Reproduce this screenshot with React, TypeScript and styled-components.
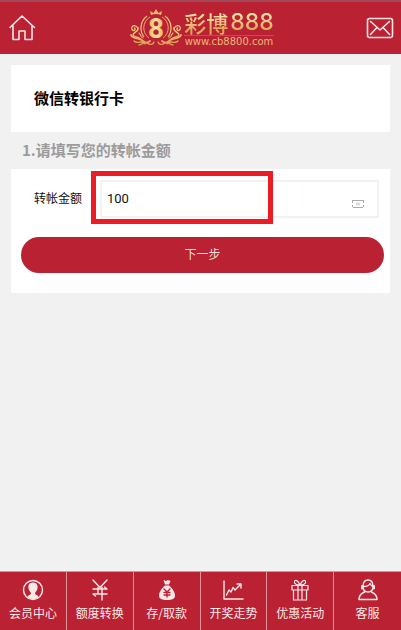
import React from "react";
import styled, { createGlobalStyle } from "styled-components";

const RED = "#ba2233";
const SANS = '"Noto Sans CJK SC", "Noto Sans", sans-serif';

const GlobalStyle = createGlobalStyle`
  *, *::before, *::after { box-sizing: border-box; }
  body { margin: 0; background: #f1f1f1; font-family: ${SANS}; color: #111; }
  button, input { font-family: inherit; }
`;

const Page = styled.div`
  min-height: 100vh;
  display: flex;
  flex-direction: column;
`;

const Header = styled.header`
  height: 54px;
  padding: 0 7px 0 8px;
  display: flex;
  align-items: center;
  justify-content: space-between;
  background: ${RED};
  border-top: 2px solid #a4495a;
`;

const IconLink = styled.a`
  display: flex;
  color: #fbe4e6;
`;

const Brand = styled.a`
  display: flex;
  align-items: center;
  gap: 2px;
  margin-left: 2px;
  text-decoration: none;
`;

const BrandText = styled.span`
  display: flex;
  flex-direction: column;
`;

const BrandName = styled.span`
  display: flex;
  align-items: center;
  gap: 2px;
  height: 25px;
  font-size: 22px;
  line-height: 25px;
  font-weight: 500;
  color: transparent;
  background: linear-gradient(#fbe3a4 20%, #e2a65a 80%);
  background-clip: text;
  -webkit-background-clip: text;
`;

const BrandNumber = styled.span`
  font-family: Inter, sans-serif;
  font-size: 23px;
`;

const BrandSite = styled.span`
  border-top: 1px solid #c64c48;
  font: 10px/11px "DejaVu Sans", sans-serif;
  text-align: center;
  color: #e9b877;
`;

const Main = styled.main`
  flex: 1;
  padding: 11px 11px 0;
`;

const TitleCard = styled.section`
  padding: 21px 23px 22px;
  background: #fff;
`;

const Title = styled.h1`
  margin: 0;
  font-size: 15px;
  line-height: 24px;
  font-weight: 700;
  color: #000;
`;

const StepTitle = styled.h2`
  margin: 0;
  padding: 6px 11px 7px;
  font-size: 15px;
  line-height: 24px;
  font-weight: 700;
  color: #9b9b9b;
`;

const FormCard = styled.form`
  padding: 11px 6px 20px 10px;
  background: #fff;
`;

const FieldRow = styled.div`
  display: flex;
  align-items: center;
  padding: 0 5px 0 13px;
`;

const FieldLabel = styled.label`
  width: 66px;
  flex: none;
  padding-bottom: 2px;
  font-size: 12px;
  line-height: 20px;
`;

const FieldBox = styled.div`
  position: relative;
  flex: 1;
  display: flex;
  height: 38px;
  padding-right: 13px;
  border: 2px solid #f2f2f2;
`;

const AmountInput = styled.input`
  flex: 1;
  min-width: 0;
  padding: 0 5px 2px;
  border: 0;
  outline: 0;
  background: transparent;
  font: 13px Roboto, sans-serif;
  color: #111;
`;

const NoteIcon = styled.svg`
  flex: none;
  align-self: flex-end;
  margin-bottom: 8px;
`;

const Highlight = styled.span`
  position: absolute;
  left: -11px;
  top: -11px;
  width: 182px;
  height: 53px;
  border: 5px solid #ed1c24;
  pointer-events: none;
`;

const NextButton = styled.button`
  display: block;
  width: 100%;
  height: 36px;
  margin-top: 19px;
  padding: 0 0 3px;
  border: 0;
  border-radius: 18px;
  background: ${RED};
  color: #f3dcdf;
  font-size: 12px;
`;

const TabBar = styled.nav`
  display: grid;
  grid-template-columns: repeat(6, 1fr);
  border-top: 1px solid #dc8f97;
  background: ${RED};
`;

const Tab = styled.a`
  display: flex;
  flex-direction: column;
  align-items: center;
  padding: 6px 0 7px;
  color: #fbe9ea;
  font-size: 12px;
  line-height: 20px;
  gap: 1px;
  text-decoration: none;
  white-space: nowrap;
  border-right: 1px solid #e0929b;

  &:last-child { border-right: 0; }
`;

const TabIcon = styled.svg`
  width: 24px;
  height: 24px;
  fill: none;
  stroke: currentColor;
  stroke-width: 1.4;
  stroke-linejoin: round;
  stroke-linecap: round;
`;

const Scroll = () => (
  <g fill="none" stroke="url(#gold)" strokeLinecap="round">
    <path d="M8 19C4 14 0 18 2.500 21C4.500 22.500 6 20 4.500 19" strokeWidth="1.200" />
    <path d="M8 19C9 23 3 23 3 26C4 29 8 27 10 30" strokeWidth="1.500" />
    <path d="M1 26C3 31 9 28 13 32C15 34 18 34 20 32" strokeWidth="1.800" />
    <path d="M4 32C8 36 12 30 15 35M9 36C12 36 13 33 17 34C20 36 23 36 24 33" strokeWidth="1.300" />
    <path d="M9 24C11 25 10 28 13 29" strokeWidth="1.100" />
  </g>
);

const Emblem = () => (
  <svg width="52" height="38" viewBox="0 0 52 38" aria-hidden="true">
    <defs>
      <linearGradient id="gold" x1="0" y1="0" x2="0" y2="38" gradientUnits="userSpaceOnUse">
        <stop offset="0" stopColor="#eeb660" />
        <stop offset=".5" stopColor="#f3cf86" />
        <stop offset="1" stopColor="#dc9850" />
      </linearGradient>
      <linearGradient id="goldDigit" x1="17" y1="0" x2="35" y2="0" gradientUnits="userSpaceOnUse">
        <stop offset="0" stopColor="#e8a850" />
        <stop offset=".5" stopColor="#fbe6a4" />
        <stop offset="1" stopColor="#e8a850" />
      </linearGradient>
    </defs>
    <path d="M21 6L20 2L23.500 4L26 0L28.500 4L32 2L31 6Q26 4 21 6Z" fill="url(#gold)" />
    <g fill="none" stroke="url(#gold)">
      <path d="M17 7A15 15 0 0 0 14 28M35 7A15 15 0 0 1 38 28" strokeWidth="1.200" />
      <path d="M20 8A12.500 12.500 0 0 0 19 29M32 8A12.500 12.500 0 0 1 33 29" strokeWidth=".8" />
    </g>
    <Scroll />
    <g transform="translate(52 0) scale(-1 1)"><Scroll /></g>
    <text x="26" y="29" textAnchor="middle" fontFamily="Roboto, sans-serif" fontSize="28" fontWeight="700" fill="url(#goldDigit)">8</text>
  </svg>
);

const HomeIcon = () => (
  <svg width="28" height="28" viewBox="0 0 28 28" fill="none" stroke="currentColor" strokeWidth="1.600" strokeLinejoin="round" strokeLinecap="round" aria-hidden="true">
    <path d="M2 13.500L14 2L26.500 13.500M5 11.500V25.500H11V17H17V25.500H24V11.500" />
  </svg>
);

const MailIcon = () => (
  <svg width="28" height="22" viewBox="0 0 28 22" fill="none" stroke="currentColor" strokeWidth="1.600" strokeLinejoin="round" aria-hidden="true">
    <rect x="1.500" y="1.500" width="25" height="19" rx="2" />
    <path d="M4 4L14 13L24 4M4 18L11 10.500M24 18L17 10.500" />
  </svg>
);

const tabs: { label: string; icon: React.ReactNode }[] = [
  {
    label: "会员中心",
    icon: (
      <>
        <circle cx="12" cy="12" r="9.500" />
        <path d="M12 4.500C8 4.500 7 7.500 7.500 10.500C8 13 9.500 14 10 15C10 17 7.500 17 6.500 18.500C9 22 15 22 17.500 18.500C16.500 17 14 17 14 15C14.500 14 16 13 16.500 10.500C17 7.500 16 4.500 12 4.500Z" fill="currentColor" stroke="none" />
      </>
    ),
  },
  {
    label: "额度转换",
    icon: <path d="M5 2L12 9.500L19 2M10 9.500V16M14 9.500V22M5 11H19L16.500 9M19 16H5L7.500 18" />,
  },
  {
    label: "存/取款",
    icon: (
      <>
        <path d="M8.500 2L11 3L13 2L15.500 3L14 6.500H10Z" fill="currentColor" stroke="none" />
        <path d="M10 7.500H14C17 10 20 14 20 17.500C20 21 17 22 12 22C7 22 4 21 4 17.500C4 14 7 10 10 7.500Z" fill="currentColor" stroke="none" />
        <path d="M9 11L12 14L15 11M12 14V19M9 14.500H15M9 17H15" stroke={RED} />
      </>
    ),
  },
  {
    label: "开奖走势",
    icon: <path d="M3 3V21H22M5.500 17L8 12L10 14L12 9.500L14 12L19.500 6.500M16 6H20V10" />,
  },
  {
    label: "优惠活动",
    icon: (
      <path d="M4 7.500H20V12H4ZM5.500 12V22H18.500V12M10 7.500V22M14 7.500V22M12 7C10 2 7 1.500 6.500 3.500C6 6 9 7 12 7C15 7 18 6 17.500 3.500C17 1.500 14 2 12 7" strokeWidth="1.200" />
    ),
  },
  {
    label: "客服",
    icon: (
      <>
        <path d="M7 8.500C7 4 9 2 12 2C15 2 17 4 17 8.500C17 12 15 14 12 14C9 14 7 12 7 8.500ZM8 8.500C11 8.500 13 7.500 14 5.500C15 7.500 16 8.500 17 8.500M8.500 14C5 15.500 3 18 3 21.500H21C21 18 19 15.500 15.500 14" />
        <path d="M6 8V10.500M18 8V10.500" strokeWidth="2" />
      </>
    ),
  },
];

export default function App() {
  return (
    <Page>
      <GlobalStyle />
      <Header>
        <IconLink href="#" aria-label="首页"><HomeIcon /></IconLink>
        <Brand href="#">
          <Emblem />
          <BrandText>
            <BrandName>彩博<BrandNumber>888</BrandNumber></BrandName>
            <BrandSite>www.cb8800.com</BrandSite>
          </BrandText>
        </Brand>
        <IconLink href="#" aria-label="消息"><MailIcon /></IconLink>
      </Header>
      <Main>
        <TitleCard><Title>微信转银行卡</Title></TitleCard>
        <StepTitle>1.请填写您的转帐金额</StepTitle>
        <FormCard onSubmit={(e) => e.preventDefault()}>
          <FieldRow>
            <FieldLabel htmlFor="amount">转帐金额</FieldLabel>
            <FieldBox>
              <AmountInput id="amount" inputMode="decimal" defaultValue="100" />
              <NoteIcon width="12" height="8" viewBox="0 0 12 8" fill="none" stroke="#aaa" aria-hidden="true">
                <path d="M0 .5H12M1 7.500H11M.5 1V3M.5 5V7M11.500 1V3M11.500 5V7" />
                <path d="M5 2.500V5.500M7 2.500V5.500" stroke="#bbb" />
              </NoteIcon>
              <Highlight />
            </FieldBox>
          </FieldRow>
          <NextButton type="submit">下一步</NextButton>
        </FormCard>
      </Main>
      <TabBar>
        {tabs.map((tab) => (
          <Tab href="#" key={tab.label}>
            <TabIcon viewBox="0 0 24 24" aria-hidden="true">{tab.icon}</TabIcon>
            {tab.label}
          </Tab>
        ))}
      </TabBar>
    </Page>
  );
}
